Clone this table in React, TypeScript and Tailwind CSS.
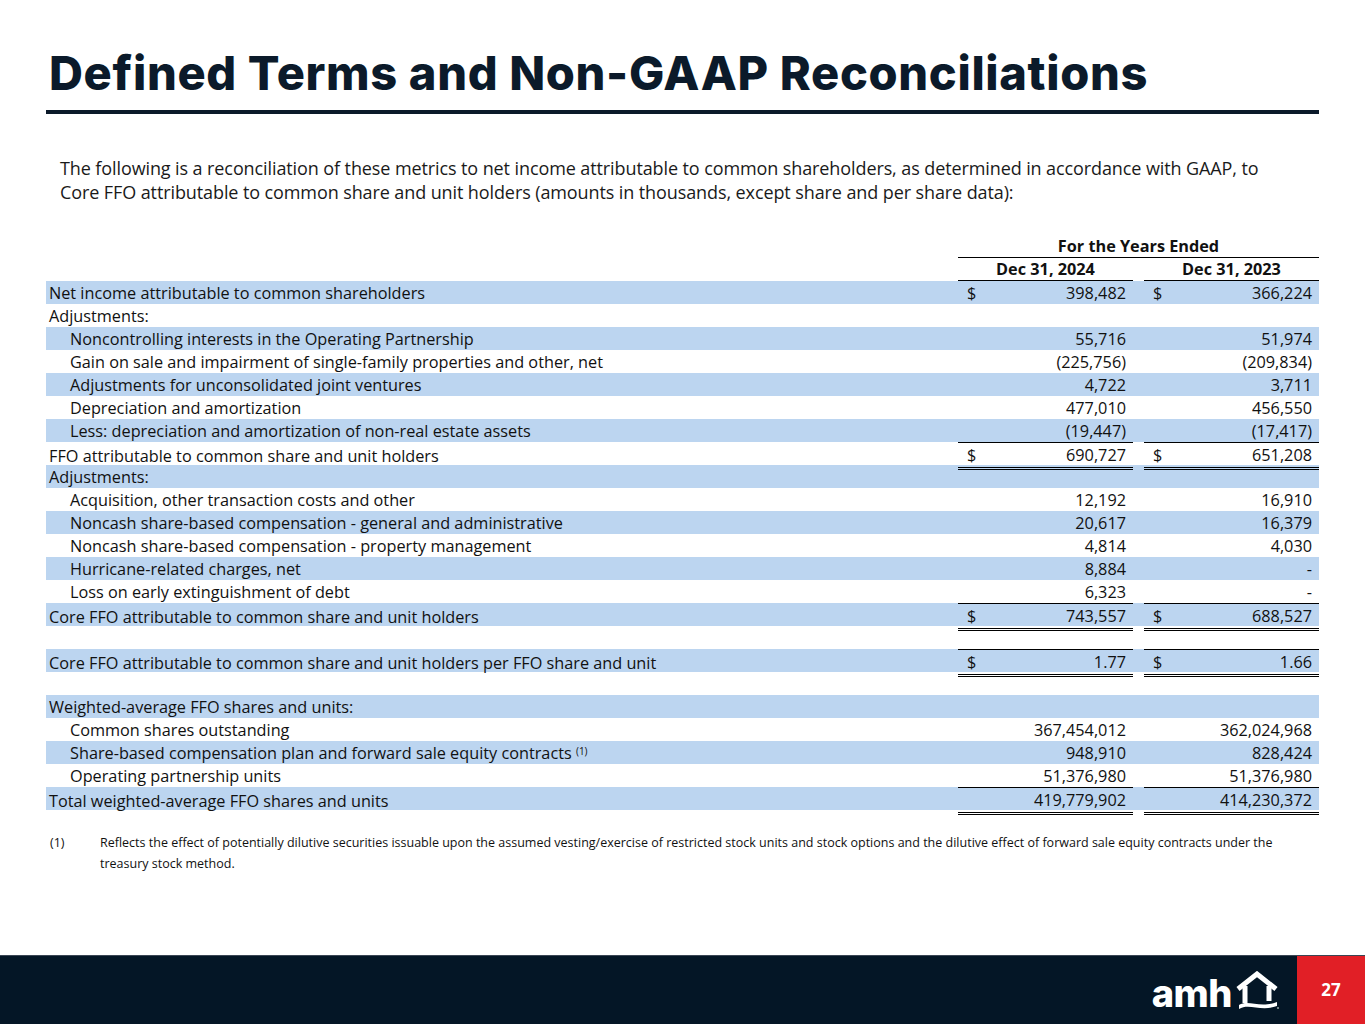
import React from 'react';

type Row = {
  label?: React.ReactNode;
  indent?: boolean;
  blue?: boolean;
  a?: string;
  b?: string;
  dollar?: boolean;
  top?: boolean;
  dbl?: boolean;
};

const rows: Row[] = [
  { label: 'Net income attributable to common shareholders', blue: true, a: '398,482', b: '366,224', dollar: true },
  { label: 'Adjustments:' },
  { label: 'Noncontrolling interests in the Operating Partnership', indent: true, blue: true, a: '55,716', b: '51,974' },
  { label: 'Gain on sale and impairment of single-family properties and other, net', indent: true, a: '(225,756)', b: '(209,834)' },
  { label: 'Adjustments for unconsolidated joint ventures', indent: true, blue: true, a: '4,722', b: '3,711' },
  { label: 'Depreciation and amortization', indent: true, a: '477,010', b: '456,550' },
  { label: 'Less: depreciation and amortization of non-real estate assets', indent: true, blue: true, a: '(19,447)', b: '(17,417)' },
  { label: 'FFO attributable to common share and unit holders', a: '690,727', b: '651,208', dollar: true, top: true, dbl: true },
  { label: 'Adjustments:', blue: true },
  { label: 'Acquisition, other transaction costs and other', indent: true, a: '12,192', b: '16,910' },
  { label: 'Noncash share-based compensation - general and administrative', indent: true, blue: true, a: '20,617', b: '16,379' },
  { label: 'Noncash share-based compensation - property management', indent: true, a: '4,814', b: '4,030' },
  { label: 'Hurricane-related charges, net', indent: true, blue: true, a: '8,884', b: '-' },
  { label: 'Loss on early extinguishment of debt', indent: true, a: '6,323', b: '-' },
  { label: 'Core FFO attributable to common share and unit holders', blue: true, a: '743,557', b: '688,527', dollar: true, top: true, dbl: true },
  {},
  { label: 'Core FFO attributable to common share and unit holders per FFO share and unit', blue: true, a: '1.77', b: '1.66', dollar: true, top: true, dbl: true },
  {},
  { label: 'Weighted-average FFO shares and units:', blue: true },
  { label: 'Common shares outstanding', indent: true, a: '367,454,012', b: '362,024,968' },
  {
    label: (
      <span>
        Share-based compensation plan and forward sale equity contracts{' '}
        <sup className="text-[10px] relative -top-[4px]">(1)</sup>
      </span>
    ),
    indent: true,
    blue: true,
    a: '948,910',
    b: '828,424',
  },
  { label: 'Operating partnership units', indent: true, a: '51,376,980', b: '51,376,980' },
  { label: 'Total weighted-average FFO shares and units', blue: true, a: '419,779,902', b: '414,230,372', top: true, dbl: true },
];

function Cell({ value, dollar, top, dbl }: { value?: string; dollar?: boolean; top?: boolean; dbl?: boolean }) {
  return (
    <div
      className={`h-full flex items-center justify-between pl-[9px] pr-[7px] ${top ? 'border-t border-black' : ''} ${
        dbl ? 'border-b-[3px] border-double border-black' : ''
      }`}
    >
      <span>{dollar ? '$' : ''}</span>
      <span>{value}</span>
    </div>
  );
}

function TableRow({ r }: { r: Row }) {
  return (
    <div className={`grid grid-cols-[912px_175px_11px_175px] h-[23px] ${r.blue ? 'bg-[#bcd5f0]' : ''}`}>
      <div className={`flex items-center whitespace-nowrap ${r.indent ? 'pl-[24px]' : 'pl-[3px]'}`}>{r.label}</div>
      <Cell value={r.a} dollar={r.dollar} top={r.top} dbl={r.dbl} />
      <div />
      <Cell value={r.b} dollar={r.dollar} top={r.top} dbl={r.dbl} />
    </div>
  );
}

function Logo() {
  return (
    <div className="flex items-end gap-[3px]">
      <span className="text-white font-extrabold text-[38px] leading-none tracking-[-0.5px] font-['Inter',sans-serif]">amh</span>
      <svg width="46" height="40" viewBox="0 0 46 40" className="mb-[1px]">
        <path d="M3 18 L22 3 L41 18" fill="none" stroke="white" strokeWidth="5" strokeLinejoin="miter" />
        <path d="M10 15 V32 M34 15 V30" fill="none" stroke="white" strokeWidth="5" />
        <path d="M4 34 C14 28 24 38 42 31 L42 35 C26 41 14 32 4 38 Z" fill="white" />
        <circle cx="43" cy="37" r="1" fill="#9aa" />
      </svg>
    </div>
  );
}

export default function App() {
  return (
    <div className="w-[1365px] h-[1024px] bg-white flex flex-col font-['Open_Sans',sans-serif] text-[#111]">
      <div className="px-[46px] pt-[44px]">
        <h1 className="pl-[3px] text-[47px] leading-[58px] font-extrabold text-[#0b1a2a] font-['Inter',sans-serif] tracking-[0.65px] whitespace-nowrap">
          Defined Terms and Non-GAAP Reconciliations
        </h1>
        <div className="mt-[8px] h-[4px] bg-[#0b1a2a]" />
        <p className="mt-[42px] pl-[14px] text-[18px] leading-[24px] text-[#1a1a1a] whitespace-nowrap tracking-[-0.1px]">
          The following is a reconciliation of these metrics to net income attributable to common shareholders, as determined in accordance with GAAP, to
          <br />
          Core FFO attributable to common share and unit holders (amounts in thousands, except share and per share data):
        </p>

        <div className="mt-[29px] text-[16.25px] text-[#111]">
          <div className="grid grid-cols-[912px_361px]">
            <div />
            <div className="text-center font-bold h-[25px] leading-[26px] border-b border-black">For the Years Ended</div>
          </div>
          <div className="grid grid-cols-[912px_175px_11px_175px] h-[23px]">
            <div />
            <div className="text-center font-bold leading-[22px] border-b border-black">Dec 31, 2024</div>
            <div />
            <div className="text-center font-bold leading-[22px] border-b border-black">Dec 31, 2023</div>
          </div>
          {rows.map((r, i) => (
            <TableRow key={i} r={r} />
          ))}
        </div>

        <div className="mt-[22px] flex text-[12.5px] leading-[21px] text-[#111]">
          <div className="w-[54px] pl-[4px] shrink-0">(1)</div>
          <p className="whitespace-nowrap">
            Reflects the effect of potentially dilutive securities issuable upon the assumed vesting/exercise of restricted stock units and stock options and the dilutive effect of forward sale equity contracts under the
            <br />
            treasury stock method.
          </p>
        </div>
      </div>

      <div className="mt-auto h-[69px] bg-[#041626] flex border-t border-[#3a4654]">
        <div className="flex-1 flex items-center justify-end pr-[16px] pt-[2px]">
          <Logo />
        </div>
        <div className="w-[68px] bg-[#e11f26] flex items-center justify-center text-white font-bold text-[17px]">27</div>
      </div>
    </div>
  );
}
